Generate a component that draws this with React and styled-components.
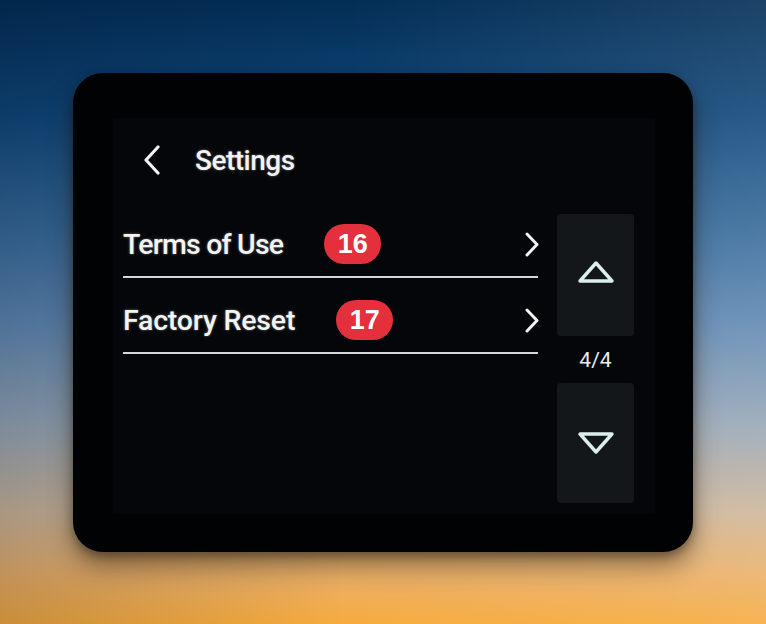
import React from "react";
import styled, { createGlobalStyle } from "styled-components";

const Global = createGlobalStyle`
  html, body { margin: 0; padding: 0; }
  body {
    width: 766px;
    height: 624px;
    overflow: hidden;
    font-family: Roboto, "Noto Sans", "Liberation Sans", sans-serif;
  }
`;

const Stage = styled.div`
  width: 766px;
  height: 624px;
  display: flex;
  align-items: center;
  justify-content: center;
  background:
    linear-gradient(90deg, rgba(0, 10, 30, 0.18) 0%, rgba(0, 0, 0, 0) 45%, rgba(255, 255, 255, 0.1) 100%),
    linear-gradient(180deg, #032d55 0%, #0f4679 18%, #3a6d9d 38%, #6189b2 52%, #98a7b6 68%, #cdb69a 82%, #ebb068 92%, #f6ab3e 100%);
`;

const Device = styled.div`
  width: 620px;
  height: 479px;
  box-sizing: border-box;
  padding: 45px 38px 38px 40px;
  background: #010203;
  border-radius: 30px;
  box-shadow: 0 14px 26px rgba(40, 25, 5, 0.45), 0 4px 10px rgba(0, 0, 0, 0.35);
  display: flex;
  margin-top: 1px;
`;

const Screen = styled.div`
  flex: 1;
  background: #040609;
  display: flex;
  flex-direction: column;
  color: #f3f3f3;
`;

const Header = styled.div`
  height: 84px;
  display: flex;
  align-items: center;
  padding-left: 30px;
  box-sizing: border-box;
`;

const Title = styled.span`
  margin-left: 34px;
  font-size: 28px;
  font-weight: 500;
  letter-spacing: -0.5px;
  text-shadow: 0 0 3px rgba(255, 255, 255, 0.4);
`;

const Body = styled.div`
  flex: 1;
  display: flex;
  padding-left: 10px;
`;

const List = styled.div`
  width: 415px;
  display: flex;
  flex-direction: column;
`;

const Row = styled.div`
  height: 76px;
  box-sizing: border-box;
  border-bottom: 2px solid #d4d6d8;
  display: flex;
  align-items: center;
  padding-top: 10px;
`;

const Label = styled.span`
  font-size: 28.5px;
  font-weight: 500;
  letter-spacing: ${(p) => p.$ls}px;
  text-shadow: 0 0 3px rgba(255, 255, 255, 0.4);
`;

const Badge = styled.span`
  margin-left: 41px;
  height: 40px;
  min-width: 57px;
  box-sizing: border-box;
  padding: 0 10px;
  border-radius: 20px;
  background: #e3303c;
  color: #fff;
  font-family: "Liberation Sans", Arial, sans-serif;
  font-weight: 700;
  font-size: 27px;
  display: inline-flex;
  align-items: center;
  justify-content: center;
`;

const Chevron = styled.svg`
  margin-left: auto;
  margin-right: -2px;
  display: block;
`;

const Side = styled.div`
  margin-left: 19px;
  margin-top: 12px;
  width: 77px;
  display: flex;
  flex-direction: column;
`;

const NavButton = styled.div`
  height: ${(p) => p.$h}px;
  background: #14171a;
  border-radius: 4px;
  display: flex;
  align-items: center;
  justify-content: center;
  padding-bottom: ${(p) => p.$shift}px;
  box-sizing: border-box;
`;

const Pager = styled.div`
  height: 47px;
  display: flex;
  align-items: center;
  justify-content: center;
  font-size: 21px;
  font-weight: 400;
  color: #ececec;
  box-sizing: border-box;
`;

const BackIcon = () => (
  <svg width="18" height="30" viewBox="0 0 18 30">
    <path d="M15 2 L3 15 L15 28" fill="none" stroke="#f2f2f2" strokeWidth="3.2" strokeLinecap="round" strokeLinejoin="round" />
  </svg>
);

const RightIcon = () => (
  <Chevron width="16" height="25" viewBox="0 0 16 25">
    <path d="M3 2 L13 12.5 L3 23" fill="none" stroke="#f2f2f2" strokeWidth="3" strokeLinecap="round" strokeLinejoin="round" />
  </Chevron>
);

const Triangle = ({ down }) => (
  <svg width="38" height="24" viewBox="0 0 38 24">
    <path
      d={down ? "M3 3 L35 3 L19 21 Z" : "M19 3 L35 21 L3 21 Z"}
      fill="none"
      stroke="#dcefee"
      strokeWidth="3.4"
      strokeLinejoin="round"
    />
  </svg>
);

const items = [
  { label: "Terms of Use", n: 16, ls: -0.8 },
  { label: "Factory Reset", n: 17, ls: -0.2 },
];

export default function App() {
  return (
    <>
      <Global />
      <Stage>
        <Device>
          <Screen>
            <Header>
              <BackIcon />
              <Title>Settings</Title>
            </Header>
            <Body>
              <List>
                {items.map((it) => (
                  <Row key={it.n}>
                    <Label $ls={it.ls}>{it.label}</Label>
                    <Badge>{it.n}</Badge>
                    <RightIcon />
                  </Row>
                ))}
              </List>
              <Side>
                <NavButton $h={122} $shift={6}>
                  <Triangle />
                </NavButton>
                <Pager>4/4</Pager>
                <NavButton $h={120} $shift={0}>
                  <Triangle down />
                </NavButton>
              </Side>
            </Body>
          </Screen>
        </Device>
      </Stage>
    </>
  );
}
